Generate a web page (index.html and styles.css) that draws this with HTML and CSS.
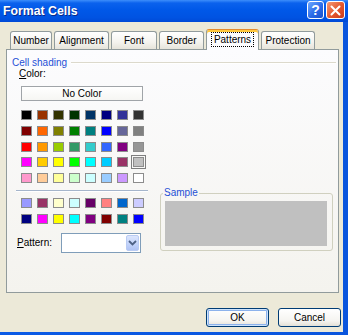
FILE: index.html
```html
<!DOCTYPE html>
<html>
<head>
	<title>Format Cells</title>
	<meta http-equiv="Content-Type" content="text/html;charset=utf-8" />
	<link rel="stylesheet" href="styles.css">
</head>
<body>

<div class="window">
	<div class="titlebar">
		<span class="title">Format Cells</span>
		<div class="caption-buttons">
			<span class="cap-btn help">?</span>
			<span class="cap-btn close">
				<svg width="11" height="11" viewBox="0 0 11 11"><path d="M1.5 1.5 L9.5 9.5 M9.5 1.5 L1.5 9.5" stroke="#fff" stroke-width="2" stroke-linecap="round"/></svg>
			</span>
		</div>
	</div>

	<div class="client">
		<div class="tabs">
			<div class="tab">Number</div>
			<div class="tab">Alignment</div>
			<div class="tab">Font</div>
			<div class="tab">Border</div>
			<div class="tab active"><span class="focus">Patterns</span></div>
			<div class="tab">Protection</div>
		</div>

		<div class="panel">
			<div class="section-head"><span>Cell shading</span><i class="rule"></i></div>
			<div class="panel-body">
				<div class="left-col">
					<div class="field-label"><u>C</u>olor:</div>
					<div class="no-color">No Color</div>
					<div class="swatches">
						<i style="background:#000000"></i><i style="background:#993300"></i><i style="background:#333300"></i><i style="background:#003300"></i><i style="background:#003366"></i><i style="background:#000080"></i><i style="background:#333399"></i><i style="background:#333333"></i>
						<i style="background:#800000"></i><i style="background:#FF6600"></i><i style="background:#808000"></i><i style="background:#008000"></i><i style="background:#008080"></i><i style="background:#0000FF"></i><i style="background:#666699"></i><i style="background:#808080"></i>
						<i style="background:#FF0000"></i><i style="background:#FF9900"></i><i style="background:#99CC00"></i><i style="background:#339966"></i><i style="background:#33CCCC"></i><i style="background:#3366FF"></i><i style="background:#800080"></i><i style="background:#969696"></i>
						<i style="background:#FF00FF"></i><i style="background:#FFCC00"></i><i style="background:#FFFF00"></i><i style="background:#00FF00"></i><i style="background:#00FFFF"></i><i style="background:#00CCFF"></i><i style="background:#993366"></i><i class="selected" style="background:#C0C0C0"></i>
						<i style="background:#FF99CC"></i><i style="background:#FFCC99"></i><i style="background:#FFFF99"></i><i style="background:#CCFFCC"></i><i style="background:#CCFFFF"></i><i style="background:#99CCFF"></i><i style="background:#CC99FF"></i><i style="background:#FFFFFF"></i>
					</div>
					<div class="sep"></div>
					<div class="swatches chart">
						<i style="background:#9999FF"></i><i style="background:#993366"></i><i style="background:#FFFFCC"></i><i style="background:#CCFFFF"></i><i style="background:#660066"></i><i style="background:#FF8080"></i><i style="background:#0066CC"></i><i style="background:#CCCCFF"></i>
						<i style="background:#000080"></i><i style="background:#FF00FF"></i><i style="background:#FFFF00"></i><i style="background:#00FFFF"></i><i style="background:#800080"></i><i style="background:#800000"></i><i style="background:#008080"></i><i style="background:#0000FF"></i>
					</div>
					<div class="pattern-row">
						<span class="pattern-label"><u>P</u>attern:</span>
						<div class="combo">
							<span class="combo-btn">
								<svg width="9" height="6" viewBox="0 0 9 6"><path d="M1 1 L4.5 4.5 L8 1" fill="none" stroke="#4D6185" stroke-width="1.8"/></svg>
							</span>
						</div>
					</div>
				</div>

				<fieldset class="sample">
					<legend>Sample</legend>
					<div class="sample-fill"></div>
				</fieldset>
			</div>
		</div>

		<div class="actions">
			<button class="btn default">OK</button>
			<button class="btn">Cancel</button>
		</div>
	</div>
</div>

</body>
</html>
```

FILE: styles.css
```css
html { height:100%; }
body { margin:0; padding:0; width:348px; height:335px; overflow:hidden; font-family:"Liberation Sans", Arial, sans-serif; font-size:10px; color:#000; background:#ECE9D8; }

.window { width:348px; height:335px; display:flex; flex-direction:column; background:linear-gradient(90deg, #0B5BE6, #0A55DD); }

/* title bar */
.titlebar { height:22px; flex:none; display:flex; align-items:flex-start; color:#fff;
	background:linear-gradient(#3D8EFB 0, #0B62ED 3px, #0058E8 45%, #0053E2 80%, #0049D6 100%); }
.title { flex:1; padding-left:3px; font-weight:bold; font-size:12.3px; line-height:22px; text-shadow:1px 1px #0A2A8A; }
.caption-buttons { display:flex; gap:2px; padding:1px 3px 0 0; }
.cap-btn { height:18px; box-sizing:border-box; border:1px solid #fff; border-radius:3px; display:flex; align-items:center; justify-content:center; }
.help { width:17px; font-weight:bold; font-size:14px; background:linear-gradient(135deg, #6FA8FF, #2B6BE8 55%, #1B50C9); }
.close { width:19px; background:linear-gradient(135deg, #F39A76, #E3562D 55%, #C83B1C); }

/* client area */
.client { flex:1; display:flex; flex-direction:column; margin:0 5px 3px 0; padding:7px 3px 0 6px; background:#ECE9D8; }

.tabs { display:flex; align-items:flex-end; gap:2px; height:20px; padding-left:4px; position:relative; z-index:1; }
.tab { height:18px; box-sizing:border-box; border:1px solid #919B9C; border-bottom:none; border-radius:3px 3px 0 0;
	background:linear-gradient(#FFFFFF, #F4F3EE 60%, #E6E4DA); text-align:center; line-height:17px; }
.tab:nth-child(1) { width:42px; }
.tab:nth-child(2) { width:55px; }
.tab:nth-child(3) { width:46px; }
.tab:nth-child(4) { width:45px; }
.tab:nth-child(5) { width:53px; }
.tab:nth-child(6) { width:54px; }
.tab.active { height:21px; margin-bottom:-1px; border-top:1px solid #E68B2C; background:#FCFCFE; box-shadow:inset 0 2px #FFC83C; line-height:20px; }
.focus { border:1px dotted #000; padding:1px 2px; }

.panel { height:244px; box-sizing:border-box; margin-right:1px; padding-top:6px; border:1px solid #919B9C; background:linear-gradient(#FCFCFE, #F4F3EE); }

.section-head { display:flex; align-items:center; height:12px; padding:0 2px 0 5px; color:#1F4FD6; }
.section-head .rule { flex:1; height:0; margin:2px 0 0 4px; border-top:1px solid #DCD9CC; border-bottom:1px solid #FFFFFF; }

.panel-body { display:flex; align-items:flex-start; gap:12px; padding-left:9px; }

.left-col { width:132px; }
.field-label { height:12px; line-height:12px; padding-left:3px; }
.no-color { width:122px; height:15px; box-sizing:border-box; margin:6px 0 0 5px; border:1px solid #A0A4A8; background:linear-gradient(#FFFFFF, #F6F6F3); text-align:center; line-height:13px; }

.swatches { display:grid; grid-template-columns:repeat(8, 11px); grid-auto-rows:10px; column-gap:5px; row-gap:5.75px; margin:9px 0 0 5px; }
.swatches i { display:block; box-sizing:border-box; border:1px solid #8C8C8C; }
.swatches i.selected { outline:1px solid #7E7E7E; outline-offset:1px; }
.swatches.chart { margin-top:6px; }

.sep { height:1px; margin-top:7px; background:#A5B5CB; border-bottom:1px solid #FFFFFF; }

.pattern-row { display:flex; align-items:center; height:20px; margin-top:9px; }
.pattern-label { width:45px; padding-left:1px; box-sizing:border-box; }
.combo { width:80px; height:20px; box-sizing:border-box; display:flex; justify-content:flex-end; padding:1px; border:1px solid #7F9DB9; background:#FFFFFF; }
.combo-btn { width:13px; box-sizing:border-box; display:flex; align-items:center; justify-content:center; border:1px solid #B9CBF3; border-radius:2px; background:linear-gradient(#DCE6FD, #C1D2FA 60%, #B0C4F5); }

.sample { width:173px; box-sizing:border-box; margin:120px 0 0 0; padding:3px 5px 4px 4px; border:1px solid #D0D0BF; border-radius:3px; min-width:0; }
.sample legend { padding:0 1px; margin-left:-2px; line-height:10px; color:#1F4FD6; }
.sample-fill { height:45px; background:#C0C0C0; }

/* buttons */
.actions { display:flex; justify-content:flex-end; gap:9px; margin-top:15px; margin-right:-1px; }
.btn { width:63px; height:19px; padding:0; font-family:inherit; font-size:10px; color:#000; border:1px solid #003C74; border-radius:3px;
	background:linear-gradient(#FFFFFF, #F5F4F0 70%, #E3E0D6); }
.btn.default { box-shadow:inset 0 0 0 1px #CEE3FC, inset 0 0 0 2px #8CB2EC; }
```
